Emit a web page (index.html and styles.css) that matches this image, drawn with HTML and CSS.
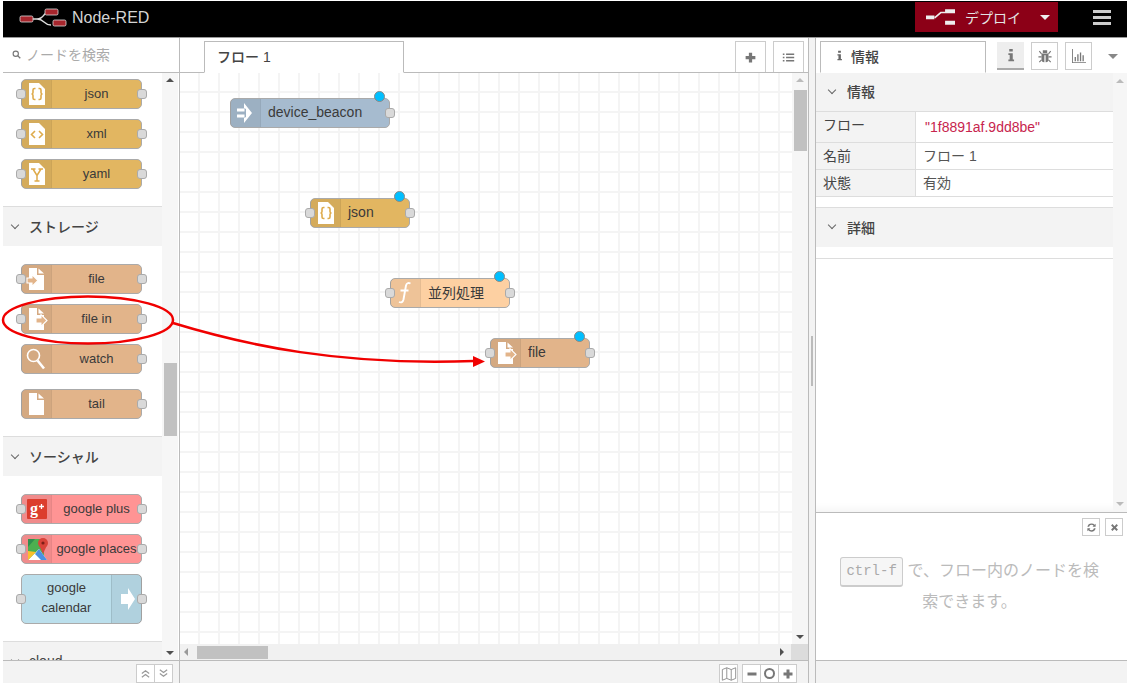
FILE: index.html
```html
<!DOCTYPE html>
<html lang="ja">

<head>
    <meta charset="utf-8">
    <title>Node-RED</title>
    <link rel="stylesheet" href="styles.css">
</head>

<body>
    <!-- Shared node icons -->
    <svg class="icon-defs">
        <symbol id="doc" viewBox="0 0 30 30">
            <path d="M8 4h10l6 6v16H8z" fill="#fff" />
        </symbol>
        <symbol id="doc-notch" viewBox="0 0 30 30">
            <path d="M8 4h8v7h7v15H8z" fill="#fff" />
            <path d="M17.500 4.500l5.500 5h-5.500z" fill="#fff" />
        </symbol>
        <symbol id="icon-json" viewBox="0 0 30 30">
            <use href="#doc" />
            <path d="M14.500 9.500h-1q-1.500 0-1.500 1.500v2.500q0 1.500-1.500 1.500 1.500 0 1.500 1.500V19q0 1.500 1.500 1.500h1M17.500 9.500h1q1.500 0 1.500 1.500v2.500q0 1.500 1.500 1.500-1.500 0-1.500 1.500V19q0 1.500-1.500 1.500h-1" fill="none" stroke="#deab4c" stroke-width="1.600" />
        </symbol>
        <symbol id="icon-xml" viewBox="0 0 30 30">
            <use href="#doc" />
            <path d="M14 12l-3.500 3.500L14 19M18 12l3.500 3.500L18 19" fill="none" stroke="#deab4c" stroke-width="1.600" />
        </symbol>
        <symbol id="icon-yaml" viewBox="0 0 30 30">
            <use href="#doc" />
            <path d="M10 10h4.500M17.500 10H22M12 10l4 6.500 4-6.500M16 16.500V22M13.500 22h5" fill="none" stroke="#deab4c" stroke-width="1.500" />
        </symbol>
        <symbol id="icon-file-out" viewBox="0 0 30 30">
            <use href="#doc-notch" />
            <path d="M6 14h5v-3.500l6 6-6 6V19H6z" fill="#e2b48a" stroke="#fff" stroke-width="1.100" />
        </symbol>
        <symbol id="icon-file-in" viewBox="0 0 30 30">
            <use href="#doc-notch" />
            <path d="M15 14h5v-3.500l6 6-6 6V19h-5z" fill="#e2b48a" stroke="#fff" stroke-width="1.100" />
        </symbol>
        <symbol id="icon-watch" viewBox="0 0 30 30">
            <circle cx="12.500" cy="11.500" r="6" fill="none" stroke="#fff" stroke-width="1.600" />
            <path d="M16.500 16.500l6.500 8" fill="none" stroke="#fff" stroke-width="2.600" />
        </symbol>
        <symbol id="icon-inject" viewBox="0 0 30 30">
            <path d="M7 10.500h7.500v3H7zM7 16.500h7.500v3H7zM14 5l8 10-8 10v-5l2-1v-8l-2-1z" fill="#fff" />
        </symbol>
        <symbol id="icon-function" viewBox="0 0 30 30">
            <path d="M20.500 5.500q-3.500-1.500-4.500 2l-2.500 14q-1 4-4.500 2.500M10.500 12.500h8" fill="none" stroke="#fff" stroke-width="1.900" />
        </symbol>
        <symbol id="icon-arrow" viewBox="0 0 30 30">
            <path d="M9 10h7V4l7 11-7 11v-6H9z" fill="#fff" />
        </symbol>
        <symbol id="icon-gplus" viewBox="0 0 30 30">
            <rect x="6" y="5" width="20" height="20" rx="1" fill="#dc3d2d" />
            <text x="9" y="20" class="gplus-text">g</text>
            <path d="M18 12.500h5M20.500 10v5" stroke="#fff" stroke-width="1.300" />
        </symbol>
        <symbol id="icon-places" viewBox="0 0 30 30">
            <path d="M7 5h16v21H7z" fill="#4caf50" />
            <path d="M7 26l11-11 8 11z" fill="#fff" />
            <path d="M7 26l8-8-8-1z" fill="#fbc02d" />
            <path d="M7 5l7 0-7 8z" fill="#2f8f4e" />
            <path d="M14 20l4-5 8 11h-6z" fill="#4a90e2" />
            <circle cx="22" cy="9" r="5" fill="#d9443a" />
            <path d="M18 11l4 9 4-9z" fill="#d9443a" />
            <circle cx="22" cy="9" r="1.600" fill="#7e1f18" />
        </symbol>
        <symbol id="icon-list" viewBox="0 0 16 16">
            <path d="M1 3h2v2H1zM1 7h2v2H1zM1 11h2v2H1zM5 3h10v2H5zM5 7h10v2H5zM5 11h10v2H5z" />
        </symbol>
        <symbol id="icon-plus" viewBox="0 0 16 16">
            <path d="M6 2h4v4h4v4h-4v4H6v-4H2V6h4z" />
        </symbol>
        <symbol id="icon-minus" viewBox="0 0 16 16">
            <path d="M2 6h12v4H2z" />
        </symbol>
        <symbol id="icon-info" viewBox="0 0 16 16">
            <path d="M6 1h4v3H6zM5 6h5v7h1.500v2h-6.500v-2h1.500V8H5z" />
        </symbol>
        <symbol id="icon-bug" viewBox="0 0 16 16">
            <path d="M5.500 1.500h5v3h-5zM4 5h8v7q0 3-3 3H8.700V7H7.300v8H7q-3 0-3-3z" />
            <path d="M1.500 2.500L4 5.500M14.500 2.500L12 5.500M.5 9h3.500M12 9h3.500M1.500 15L4 12.500M14.500 15L12 12.500" fill="none" stroke="currentColor" stroke-width="1.300" />
        </symbol>
        <symbol id="icon-chart" viewBox="0 0 16 16">
            <path d="M0 0h1v15h15v1H0zM3 9h1.500v5H3zM6 6h1.500v8H6zM9 4h1.500v10H9zM12 7h1.500v7H12z" />
        </symbol>
        <symbol id="icon-map" viewBox="0 0 18 18">
            <path d="M1.500 4l5-2 5 2 5-2v12l-5 2-5-2-5 2zM6.500 2v12M11.500 4v12" fill="none" stroke="currentColor" />
        </symbol>
        <symbol id="icon-refresh" viewBox="0 0 16 16">
            <path d="M2 7q1-5 6-5 3 0 4.500 2L14 2.500V7H9.500l1.500-1.500Q10 4 8 4 5 4 4.500 7zM14 9q-1 5-6 5-3 0-4.500-2L2 13.500V9h4.500L5 10.500Q6 12 8 12q3 0 3.500-3z" />
        </symbol>
        <symbol id="icon-close" viewBox="0 0 16 16">
            <path d="M5 3l3 3 3-3 2 2-3 3 3 3-2 2-3-3-3 3-2-2 3-3-3-3z" />
        </symbol>
        <symbol id="icon-deploy" viewBox="0 0 38 20">
            <path d="M0 8h11v5H0zM25 0h13v5H25zM25 15h13v5H25zM11 10l8-7h6v2h-5l-8 7z" fill="#eee" />
        </symbol>
    </svg>

    <div class="page">
        <!-- Top bar -->
        <header class="topbar">
            <div class="brand">
                <svg class="brand-logo" viewBox="0 0 48 20">
                    <path d="M14 11h4q4 0 7-4t7-4M18 11q4 0 7 3t7 3" fill="none" stroke="#ddd" stroke-width="1.300" />
                    <rect x="1" y="8" width="13" height="6" rx="1.500" fill="#a6262d" stroke="#ddd" stroke-width=".8" />
                    <rect x="26" y="1" width="13" height="6" rx="1.500" fill="#a6262d" stroke="#ddd" stroke-width=".8" />
                    <rect x="34" y="12" width="13" height="6" rx="1.500" fill="#a6262d" stroke="#ddd" stroke-width=".8" />
                </svg>
                <span>Node-RED</span>
            </div>
            <div class="deploy">
                <svg class="deploy-icon"><use href="#icon-deploy" /></svg>
                <span class="deploy-label">デプロイ</span>
                <span class="caret caret-white"></span>
            </div>
            <div class="burger"><i></i><i></i><i></i></div>
        </header>

        <main class="main">
            <!-- Palette -->
            <aside class="palette">
                <div class="palette-search">
                    <svg class="search-icon" viewBox="0 0 12 12">
                        <circle cx="5" cy="5" r="3.500" fill="none" stroke="#777" stroke-width="1.500" />
                        <path d="M7.500 7.500l3.500 3.500" stroke="#777" stroke-width="1.800" />
                    </svg>
                    <span>ノードを検索</span>
                </div>
                <div class="palette-body">
                    <div class="palette-list">
                        <div class="palette-nodes">
                            <div class="node node-parser"><span class="node-icon"><svg><use href="#icon-json" /></svg></span><span class="node-label">json</span><i class="port port-in"></i><i class="port port-out"></i></div>
                            <div class="node node-parser"><span class="node-icon"><svg><use href="#icon-xml" /></svg></span><span class="node-label">xml</span><i class="port port-in"></i><i class="port port-out"></i></div>
                            <div class="node node-parser"><span class="node-icon"><svg><use href="#icon-yaml" /></svg></span><span class="node-label">yaml</span><i class="port port-in"></i><i class="port port-out"></i></div>
                        </div>
                        <div class="palette-header"><span class="chevron"></span>ストレージ</div>
                        <div class="palette-nodes">
                            <div class="node node-storage"><span class="node-icon"><svg><use href="#icon-file-out" /></svg></span><span class="node-label">file</span><i class="port port-in"></i><i class="port port-out"></i></div>
                            <div class="node node-storage"><span class="node-icon"><svg><use href="#icon-file-in" /></svg></span><span class="node-label">file in</span><i class="port port-in"></i><i class="port port-out"></i></div>
                            <div class="node node-storage"><span class="node-icon"><svg><use href="#icon-watch" /></svg></span><span class="node-label">watch</span><i class="port port-out"></i></div>
                            <div class="node node-storage node-spaced"><span class="node-icon"><svg><use href="#doc-notch" /></svg></span><span class="node-label">tail</span><i class="port port-out"></i></div>
                        </div>
                        <div class="palette-header"><span class="chevron"></span>ソーシャル</div>
                        <div class="palette-nodes">
                            <div class="node node-google"><span class="node-icon"><svg><use href="#icon-gplus" /></svg></span><span class="node-label">google plus</span><i class="port port-in"></i><i class="port port-out"></i></div>
                            <div class="node node-google"><span class="node-icon"><svg><use href="#icon-places" /></svg></span><span class="node-label">google places</span><i class="port port-in"></i><i class="port port-out"></i></div>
                            <div class="node node-calendar"><span class="node-label">google<br>calendar</span><span class="node-icon node-icon-right"><svg><use href="#icon-arrow" /></svg></span><i class="port port-in"></i><i class="port port-out"></i></div>
                        </div>
                        <div class="palette-header"><span class="chevron"></span>cloud</div>
                    </div>
                    <div class="scrollbar scrollbar-v">
                        <span class="arrow arrow-up"></span>
                        <span class="thumb thumb-palette"></span>
                        <span class="arrow arrow-down"></span>
                    </div>
                </div>
                <footer class="footer">
                    <div class="btn-group">
                        <span class="foot-btn"><svg viewBox="0 0 12 12" class="double"><path d="M2 6l4-3 4 3M2 10l4-3 4 3" /></svg></span>
                        <span class="foot-btn"><svg viewBox="0 0 12 12" class="double"><path d="M2 2l4 3 4-3M2 6l4 3 4-3" /></svg></span>
                    </div>
                </footer>
            </aside>

            <!-- Workspace -->
            <section class="workspace">
                <div class="tabbar">
                    <div class="tab tab-flow">フロー 1</div>
                    <div class="tab-tools">
                        <span class="tab-btn"><svg class="tool-icon"><use href="#icon-plus" /></svg></span>
                        <span class="tab-btn"><svg class="tool-icon"><use href="#icon-list" /></svg></span>
                    </div>
                </div>
                <div class="canvas-row">
                    <div class="canvas">
                        <div class="node node-inject canvas-node beacon"><span class="node-icon"><svg><use href="#icon-inject" /></svg></span><span class="node-label">device_beacon</span><i class="port port-out"></i><i class="dot"></i></div>
                        <div class="node node-parser canvas-node json"><span class="node-icon"><svg><use href="#icon-json" /></svg></span><span class="node-label">json</span><i class="port port-in"></i><i class="port port-out"></i><i class="dot"></i></div>
                        <div class="node node-function canvas-node func"><span class="node-icon"><svg><use href="#icon-function" /></svg></span><span class="node-label">並列処理</span><i class="port port-in"></i><i class="port port-out"></i><i class="dot"></i></div>
                        <div class="node node-storage canvas-node file"><span class="node-icon"><svg><use href="#icon-file-in" /></svg></span><span class="node-label">file</span><i class="port port-in"></i><i class="port port-out"></i><i class="dot"></i></div>
                    </div>
                    <div class="scrollbar scrollbar-v">
                        <span class="arrow arrow-up arrow-light"></span>
                        <span class="thumb thumb-canvas"></span>
                        <span class="arrow arrow-down"></span>
                    </div>
                </div>
                <div class="scrollbar-h">
                    <span class="arrow arrow-left"></span>
                    <span class="thumb thumb-h"></span>
                    <span class="arrow arrow-right"></span>
                    <span class="corner"></span>
                </div>
                <footer class="footer footer-workspace">
                    <span class="foot-btn map-btn"><svg class="map-icon"><use href="#icon-map" /></svg></span>
                    <div class="btn-group">
                        <span class="foot-btn"><svg class="zoom-icon"><use href="#icon-minus" /></svg></span>
                        <span class="foot-btn"><i class="zoom-ring"></i></span>
                        <span class="foot-btn"><svg class="zoom-icon"><use href="#icon-plus" /></svg></span>
                    </div>
                </footer>
            </section>

            <div class="separator"><i class="grip"></i></div>

            <!-- Sidebar -->
            <aside class="sidebar">
                <div class="sidebar-tabs">
                    <div class="tab tab-info"><svg class="tab-info-icon"><use href="#icon-info" /></svg>情報</div>
                    <span class="side-btn side-btn-active"><svg><use href="#icon-info" /></svg></span>
                    <span class="side-btn"><svg><use href="#icon-bug" /></svg></span>
                    <span class="side-btn"><svg><use href="#icon-chart" /></svg></span>
                    <span class="caret caret-gray"></span>
                </div>
                <div class="sidebar-body">
                    <div class="sidebar-content">
                        <div class="side-header"><span class="chevron"></span>情報</div>
                        <div class="info-row info-row-first"><div class="info-key">フロー</div><div class="info-value info-id">"1f8891af.9dd8be"</div></div>
                        <div class="info-row"><div class="info-key">名前</div><div class="info-value">フロー 1</div></div>
                        <div class="info-row"><div class="info-key">状態</div><div class="info-value">有効</div></div>
                        <div class="side-header side-header-second"><span class="chevron"></span>詳細</div>
                        <div class="side-empty"></div>
                    </div>
                    <div class="scrollbar scrollbar-side">
                        <span class="arrow arrow-up arrow-light"></span>
                        <span class="arrow arrow-down arrow-light"></span>
                    </div>
                </div>
                <div class="tips">
                    <div class="tips-tools">
                        <span class="tips-btn"><svg><use href="#icon-refresh" /></svg></span>
                        <span class="tips-btn"><svg><use href="#icon-close" /></svg></span>
                    </div>
                    <p class="tips-text"><kbd class="key">ctrl-f</kbd> で、フロー内のノードを検索できます。</p>
                </div>
                <footer class="footer"></footer>
            </aside>
        </main>

        <!-- Red annotation drawn over the editor -->
        <svg class="annotation" viewBox="0 0 1127 685">
            <ellipse cx="88" cy="320" rx="85" ry="23.500" fill="none" stroke="#f00000" stroke-width="2.500" />
            <path d="M173 323C245 345 340 366 474 361" fill="none" stroke="#f00000" stroke-width="2.500" />
            <path d="M473 356l12 5.500-12 5.500z" fill="#f00000" />
        </svg>
    </div>
</body>

</html>
```

FILE: styles.css
```css
* {
    margin: 0;
    padding: 0;
    box-sizing: border-box;
}

body {
    font-family: "Liberation Sans", "Noto Sans CJK JP", sans-serif;
    font-size: 14px;
    color: #444;
    background-color: #fff;
    overflow: hidden;
}

.icon-defs {
    display: none;
}

.page {
    position: relative;
    width: 1127px;
    height: 685px;
    padding: 1px 0 2px 3px;
    display: flex;
    flex-direction: column;
}

/* Top bar */
.topbar {
    flex: 0 0 37px;
    background-color: #000;
    display: flex;
    align-items: flex-start;
    border-bottom: 1px solid #999;
}

.brand {
    display: flex;
    align-items: center;
    gap: 5px;
    margin: 7px 0 0 16px;
    color: #d4d4d4;
    font-size: 16px;
}

.brand-logo {
    width: 48px;
    height: 20px;
}

.deploy {
    margin: 1px 0 0 auto;
    width: 143px;
    height: 30px;
    background-color: #8c0017;
    display: flex;
    align-items: center;
    color: #e4e4e4;
    font-size: 14px;
}

.deploy-icon {
    width: 29px;
    height: 16px;
    margin-left: 11px;
}

.deploy-label {
    margin-left: 10px;
}

.caret {
    width: 0;
    height: 0;
    border-left: 5px solid transparent;
    border-right: 5px solid transparent;
    border-top: 5px solid #eee;
}

.caret-white {
    margin-left: 19px;
}

.caret-gray {
    margin-left: 16px;
    border-top-color: #888;
}

.burger {
    margin: 9px 16px 0 35px;
    width: 18px;
    display: flex;
    flex-direction: column;
    gap: 3px;
}

.burger i {
    height: 3px;
    background-color: #ccc;
}

/* Main columns */
.main {
    flex: 1;
    min-height: 0;
    display: flex;
}

.palette {
    width: 177px;
    display: flex;
    flex-direction: column;
    border-right: 1px solid #bbb;
}

.workspace {
    width: 628px;
    display: flex;
    flex-direction: column;
}

.separator {
    width: 8px;
    background-color: #f3f3f3;
    border-left: 1px solid #bbb;
    border-right: 1px solid #bbb;
    display: flex;
    align-items: center;
    justify-content: center;
}

.grip {
    width: 2px;
    height: 50px;
    background-color: #bbb;
}

.sidebar {
    width: 311px;
    display: flex;
    flex-direction: column;
}

/* Palette */
.palette-search {
    flex: 0 0 35px;
    display: flex;
    align-items: center;
    gap: 5px;
    padding: 0 0 2px 9px;
    color: #aaa;
    border-bottom: 1px solid #bbb;
}

.search-icon {
    width: 9px;
    height: 9px;
}

.palette-body {
    flex: 1;
    min-height: 0;
    display: flex;
}

.palette-list {
    width: 159px;
    overflow: hidden;
}

.palette-nodes {
    display: flex;
    flex-direction: column;
    gap: 10px;
    padding: 18px 0 17px 18px;
    border-bottom: 1px solid #ddd;
}

.palette-nodes:first-child {
    padding-top: 6px;
    height: 134px;
}

.palette-header,
.side-header {
    display: flex;
    align-items: center;
    background-color: #f3f3f3;
    font-weight: 500;
    font-size: 14px;
    color: #444;
}

.palette-header {
    height: 39px;
    padding: 0 0 1px 9px;
}

.palette-header .chevron {
    margin-right: 11px;
}

.chevron {
    width: 6px;
    height: 6px;
    margin: -3px 9px 0 0;
    border-right: 1px solid #666;
    border-bottom: 1px solid #666;
    transform: rotate(45deg);
}

/* Nodes */
.node {
    position: relative;
    display: flex;
    width: 121px;
    height: 30px;
    border: 1px solid #aaa;
    border-radius: 5px;
    color: #3a3a3a;
    font-size: 13px;
    flex-shrink: 0;
}

.node-parser {
    background-color: #e2b661;
}

.node-storage {
    background-color: #e2b48a;
}

.node-inject {
    background-color: #a6bbcf;
}

.node-function {
    background-color: #fdd0a2;
}

.node-google {
    background-color: #ff9494;
}

.node-calendar {
    height: 50px;
    background-color: #bbdfec;
}

.node-spaced {
    margin-top: 5px;
}

.node-icon {
    flex: 0 0 30px;
    margin-left: -1px;
    background-color: rgba(0, 0, 0, 0.06);
    border-right: 1px solid rgba(0, 0, 0, 0.04);
    border-radius: 4px 0 0 4px;
    display: flex;
    align-items: center;
}

.node-icon svg {
    width: 30px;
    height: 30px;
    flex-shrink: 0;
}

.node-icon-right {
    margin: 0 -1px 0 0;
    border-right: 0;
    border-left: 1px solid rgba(0, 0, 0, 0.1);
    border-radius: 0 4px 4px 0;
}

.node-label {
    flex: 1;
    display: flex;
    align-items: center;
    justify-content: center;
    padding-bottom: 2px;
    white-space: nowrap;
    text-align: center;
}

.node-calendar .node-label {
    line-height: 20px;
}

.port {
    position: absolute;
    top: 50%;
    width: 10px;
    height: 10px;
    margin-top: -5px;
    background-color: #d9d9d9;
    border: 1px solid #aaa;
    border-radius: 3px;
}

.port-in {
    left: -6px;
}

.port-out {
    right: -6px;
}

.dot {
    position: absolute;
    top: -8px;
    right: 4px;
    width: 11px;
    height: 11px;
    background-color: #00bfff;
    border: 1px solid #888;
    border-radius: 50%;
}

.gplus-text {
    font: bold 16px "Liberation Serif", serif;
    fill: #fff;
}

/* Workspace */
.tabbar {
    flex: 0 0 35px;
    display: flex;
    align-items: flex-end;
    padding: 0 4px 0 24px;
    border-bottom: 1px solid #bbb;
    position: relative;
}

.tab {
    height: 32px;
    margin-bottom: -1px;
    padding-bottom: 2px;
    background-color: #fff;
    border: 1px solid #bbb;
    border-bottom-color: #fff;
    display: flex;
    align-items: center;
    font-weight: 500;
    font-size: 14px;
    color: #444;
}

.tab-flow {
    width: 200px;
    padding-left: 12px;
}

.tab-tools {
    margin-left: auto;
    display: flex;
    gap: 7px;
}

.tab-btn {
    width: 31px;
    height: 31px;
    border: 1px solid #ccc;
    border-bottom: 0;
    display: flex;
    align-items: center;
    justify-content: center;
}

.tool-icon {
    width: 13px;
    height: 13px;
    fill: #777;
}

.canvas-row {
    flex: 1;
    min-height: 0;
    display: flex;
}

.canvas {
    position: relative;
    flex: 1;
    overflow: hidden;
    background-color: #fff;
    background-image:
        linear-gradient(to right, #f4f4f4 2px, transparent 2px),
        linear-gradient(to bottom, #f4f4f4 2px, transparent 2px);
    background-size: 20px 20px;
    background-position: -2px 18px;
}

.canvas-node {
    position: absolute;
    font-size: 14px;
}

.canvas-node .node-label {
    justify-content: flex-start;
    padding-left: 7px;
}

.beacon {
    left: 50px;
    top: 25px;
    width: 160px;
}

.json {
    left: 130px;
    top: 125px;
    width: 100px;
}

.func {
    left: 210px;
    top: 205px;
    width: 120px;
}

.file {
    left: 310px;
    top: 265px;
    width: 100px;
}

/* Scrollbars */
.scrollbar {
    display: flex;
    flex-direction: column;
    align-items: center;
    background-color: #f6f6f6;
    padding: 5px 0;
}

.scrollbar-v {
    flex: 0 0 16px;
}

.scrollbar-side {
    flex: 0 0 14px;
    justify-content: space-between;
    padding: 6px 0;
}

.thumb {
    display: block;
    background-color: #c1c1c1;
}

.thumb-palette {
    width: 13px;
    height: 73px;
    margin-top: 281px;
}

.thumb-canvas {
    width: 13px;
    height: 61px;
    margin-top: 8px;
}

.arrow {
    width: 0;
    height: 0;
    flex-shrink: 0;
}

.arrow-up {
    border-left: 4px solid transparent;
    border-right: 4px solid transparent;
    border-bottom: 4px solid #505050;
}

.arrow-down {
    margin-top: auto;
    border-left: 4px solid transparent;
    border-right: 4px solid transparent;
    border-top: 4px solid #505050;
}

.arrow-light {
    border-top-color: #bbb;
    border-bottom-color: #bbb;
}

.scrollbar-h {
    flex: 0 0 16px;
    display: flex;
    align-items: center;
    background-color: #f1f1f1;
    padding-left: 4px;
}

.arrow-left {
    border-top: 4px solid transparent;
    border-bottom: 4px solid transparent;
    border-right: 4px solid #999;
}

.arrow-right {
    margin-left: auto;
    border-top: 4px solid transparent;
    border-bottom: 4px solid transparent;
    border-left: 4px solid #505050;
}

.thumb-h {
    width: 71px;
    height: 13px;
    margin-left: 9px;
}

.corner {
    width: 17px;
    height: 16px;
    margin-left: 7px;
    background-color: #dcdcdc;
}

/* Footers */
.footer {
    flex: 0 0 23px;
    display: flex;
    justify-content: flex-end;
    align-items: flex-end;
    padding-right: 6px;
    background-color: #f3f3f3;
    border-top: 1px solid #bbb;
}

.footer-workspace {
    gap: 4px;
    padding-right: 11px;
}

.btn-group {
    display: flex;
}

.foot-btn {
    width: 19px;
    height: 19px;
    background-color: #fff;
    border: 1px solid #ccc;
    display: flex;
    align-items: center;
    justify-content: center;
}

.foot-btn + .foot-btn {
    margin-left: -1px;
}

.double {
    width: 11px;
    height: 11px;
    fill: none;
    stroke: #999;
    stroke-width: 1.300;
}

.map-icon {
    width: 16px;
    height: 16px;
    color: #888;
}

.zoom-icon {
    width: 12px;
    height: 12px;
    fill: #777;
}

.zoom-ring {
    width: 11px;
    height: 11px;
    border: 2px solid #777;
    border-radius: 50%;
}

/* Sidebar */
.sidebar-tabs {
    flex: 0 0 35px;
    display: flex;
    align-items: flex-end;
    padding: 0 0 3px 4px;
    position: relative;
}

.tab-info {
    width: 166px;
    margin-bottom: -3px;
    padding: 0 0 3px 13px;
    gap: 6px;
}

.tab-info-icon {
    width: 11px;
    height: 11px;
    fill: #666;
}

.side-btn {
    width: 27px;
    height: 28px;
    margin-left: 7px;
    border: 1px solid #ccc;
    display: flex;
    align-items: center;
    justify-content: center;
}

.side-btn svg {
    width: 14px;
    height: 14px;
    fill: #777;
    color: #777;
}

.side-btn-active {
    margin-left: 11px;
    background-color: #eee;
    border: 0;
    border-bottom: 2px solid #aaa;
}

.caret-gray {
    align-self: center;
    margin-top: 4px;
}

.sidebar-body {
    flex: 1;
    min-height: 0;
    display: flex;
    border-bottom: 1px solid #bbb;
    box-shadow: inset 0 -12px 10px -10px rgba(0, 0, 0, 0.06);
}

.sidebar-content {
    flex: 1;
}

.side-header {
    height: 38px;
    padding: 0 0 2px 13px;
}

.side-header .chevron {
    margin-right: 12px;
}

.side-header-second {
    height: 40px;
    margin-top: 10px;
    border-top: 1px solid #ddd;
}

.side-empty {
    height: 12px;
    border-bottom: 1px solid #ddd;
}

.info-row {
    display: flex;
    height: 27px;
    border-bottom: 1px solid #ddd;
}

.info-row-first {
    height: 32px;
    border-top: 1px solid #ddd;
}

.info-key {
    width: 100px;
    padding: 0 0 2px 7px;
    background-color: #f3f3f3;
    border-right: 1px solid #ddd;
    display: flex;
    align-items: center;
    color: #444;
}

.info-value {
    flex: 1;
    padding: 0 0 2px 7px;
    display: flex;
    align-items: center;
    color: #555;
}

.info-row-first .info-key {
    padding-bottom: 7px;
}

.info-id {
    padding: 0 0 0 9px;
    color: #c7254e;
}

.tips {
    flex: 0 0 147px;
    padding: 5px 4px 0 0;
    background-color: #fff;
}

.tips-tools {
    display: flex;
    justify-content: flex-end;
    gap: 5px;
}

.tips-btn {
    width: 18px;
    height: 18px;
    border: 1px solid #ccc;
    display: flex;
    align-items: center;
    justify-content: center;
}

.tips-btn svg {
    width: 11px;
    height: 11px;
    fill: #777;
}

.tips-text {
    margin: 20px 21px 0 21px;
    text-align: center;
    font-size: 16px;
    line-height: 30px;
    color: #bbb;
}

.key {
    display: inline-block;
    width: 63px;
    height: 30px;
    line-height: 26px;
    font-family: "Liberation Mono", monospace;
    font-size: 14px;
    color: #aaa;
    background-color: #f6f6f6;
    border: 1px solid #ccc;
    border-bottom-width: 2px;
    border-radius: 3px;
    vertical-align: middle;
}

/* Annotation overlay */
.annotation {
    position: absolute;
    left: 0;
    top: 0;
    width: 1127px;
    height: 685px;
    pointer-events: none;
}
```
